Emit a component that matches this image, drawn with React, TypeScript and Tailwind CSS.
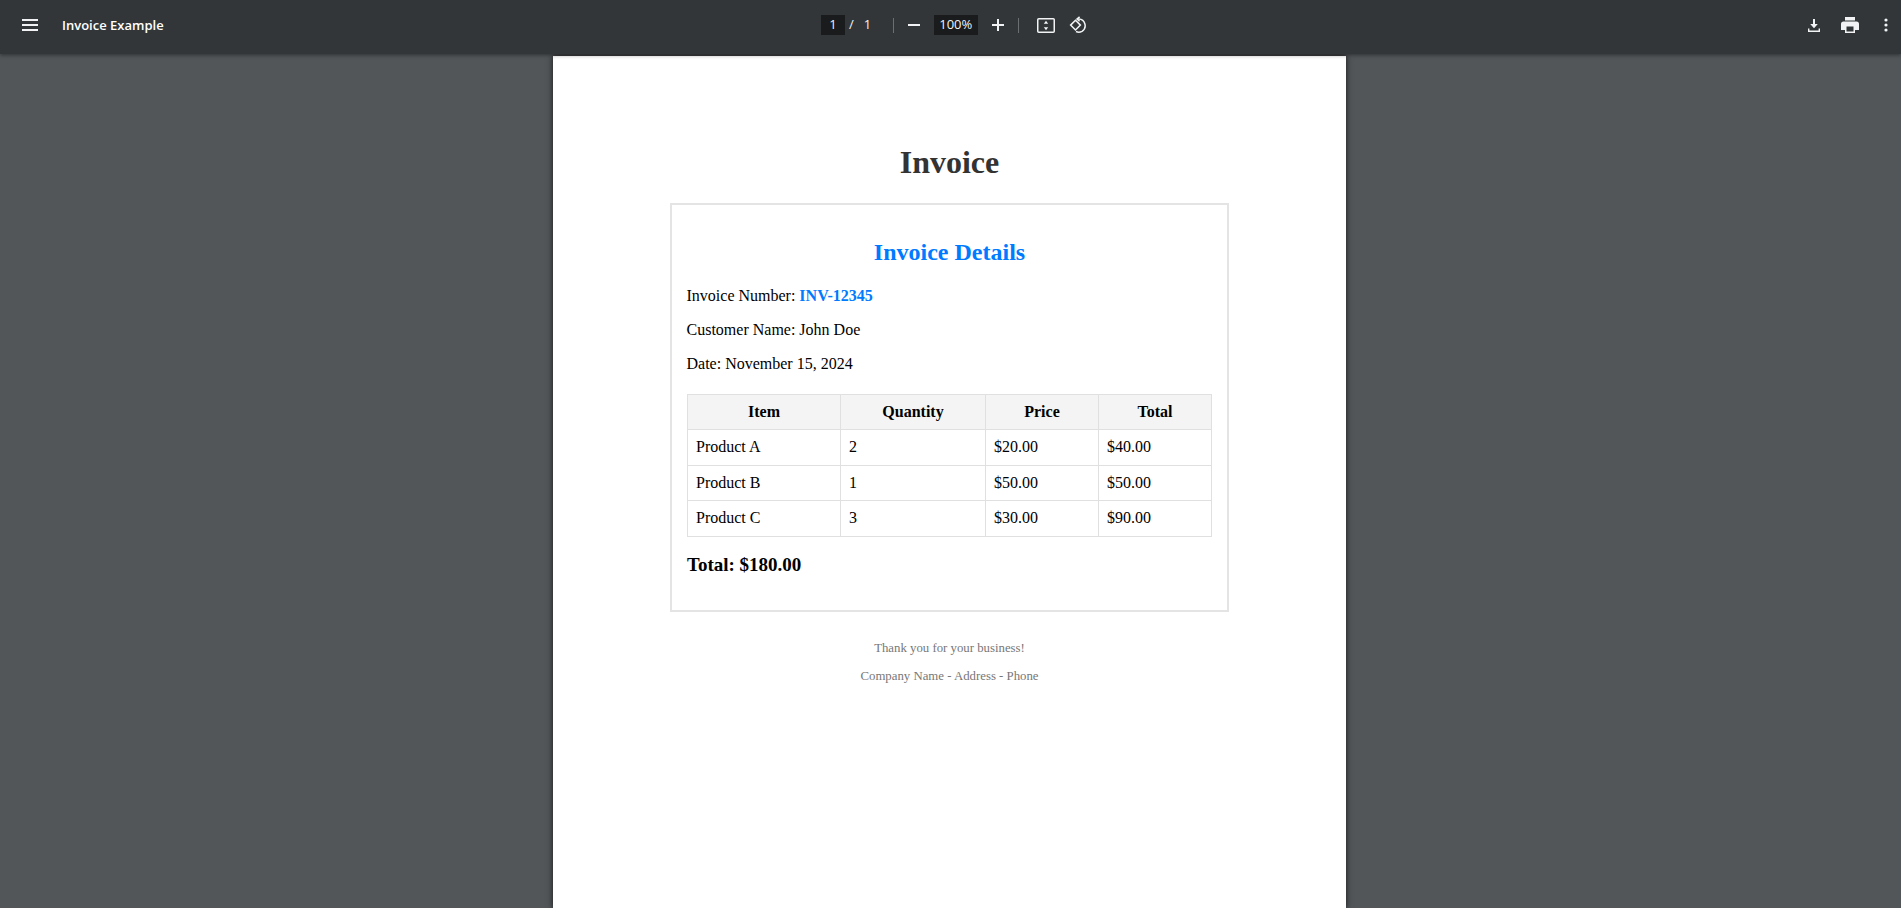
const rows = [
  { item: "Product A", qty: "2", price: "$20.00", total: "$40.00" },
  { item: "Product B", qty: "1", price: "$50.00", total: "$50.00" },
  { item: "Product C", qty: "3", price: "$30.00", total: "$90.00" },
]

function Toolbar() {
  return (
    <header className="relative z-10 flex h-[54px] items-center bg-[#323639] pb-[4px] text-white shadow-[0_1px_4px_rgba(0,0,0,0.45)] font-['Open_Sans',sans-serif]">
      <div className="flex w-[821px] shrink-0 items-center pl-[22px]">
        <svg width="16" height="12" viewBox="0 0 16 12" fill="#f1f3f4">
          <rect width="16" height="2" />
          <rect y="5" width="16" height="2" />
          <rect y="10" width="16" height="2" />
        </svg>
        <span className="ml-6 text-[13px] font-semibold leading-none text-white">Invoice Example</span>
      </div>

      <div className="flex items-center text-[13px] text-[#f1f3f4]">
        <span className="flex h-5 w-6 items-center justify-center bg-[#191b1c]">1</span>
        <span className="ml-[4px]">/</span>
        <span className="ml-[10px] w-[29px]">1</span>
        <div className="h-[15px] w-px bg-[#6b6f72]" />
        <svg className="ml-[14px]" width="12" height="2" viewBox="0 0 12 2" fill="#f1f3f4">
          <rect width="12" height="2" />
        </svg>
        <span className="ml-[14px] flex h-5 w-11 items-center justify-center bg-[#191b1c]">100%</span>
        <svg className="ml-[14px]" width="12" height="12" viewBox="0 0 12 12" fill="#f1f3f4">
          <rect y="5" width="12" height="2" />
          <rect x="5" width="2" height="12" />
        </svg>
        <div className="ml-[14px] h-[15px] w-px bg-[#6b6f72]" />
        <svg className="ml-[18px]" width="18" height="15" viewBox="0 0 18 15" fill="none">
          <rect x="0.75" y="0.75" width="16.5" height="13.5" rx="1" stroke="#f1f3f4" strokeWidth="1.5" />
          <path d="M9 2.800 11.200 5.800H6.800zM9 12.200 6.800 9.200h4.400z" fill="#f1f3f4" />
        </svg>
        <svg className="ml-[14px]" width="18" height="18" viewBox="0 0 18 18" fill="none" stroke="#f1f3f4" strokeWidth="1.5">
          <path d="M6.500 4.200 1.600 9.100l4.900 4.900 4.900-4.900z" />
          <path d="M8.200 3.100h1.600a6.600 6.600 0 0 1 3.200 12.200 6.600 6.600 0 0 1-6 .2" />
          <path d="M10.600.9 8 3.100l2.600 2.200" />
        </svg>
      </div>

      <div className="ml-auto flex items-center pr-[13px]">
        <svg width="12" height="13" viewBox="0 0 12 13" fill="#f1f3f4">
          <path d="M5 0h2v5h2.800L6 9.200 2.200 5H5z" />
          <path d="M0 9.500h1.400v2.100h9.200V9.500H12V13H0z" />
        </svg>
        <svg className="ml-[21px]" width="18" height="16" viewBox="0 0 18 16" fill="#f1f3f4">
          <path fillRule="evenodd" d="M4 0h10v3.500H4zM2.500 4.500h13A2.500 2.500 0 0 1 18 7v6h-4v3H4v-3H0V7a2.500 2.500 0 0 1 2.500-2.500zM5.500 9.500V14.500h7V9.500z" />
        </svg>
        <svg className="ml-[25px]" width="4" height="14" viewBox="0 0 4 14" fill="#f1f3f4">
          <circle cx="2" cy="2" r="1.600" />
          <circle cx="2" cy="7" r="1.600" />
          <circle cx="2" cy="12" r="1.600" />
        </svg>
      </div>
    </header>
  )
}

export default function App() {
  return (
    <div className="h-[908px] overflow-hidden bg-[#525659]">
      <Toolbar />
      <main className="mt-[2px] ml-[553px] h-[852px] w-[793px] bg-white pt-[88px] shadow-[0_0_6px_rgba(0,0,0,0.75)] font-['Liberation_Serif',serif] text-[16px] text-black">
        <h1 className="text-center text-[32px] font-bold leading-[37px] text-[#333]">Invoice</h1>
        <section className="mx-[117px] mt-[22px] h-[409px] border-2 border-[#e4e4e4] px-[15px] pt-[33px]">
          <h2 className="text-center text-[24px] font-bold leading-[28px] text-[#007bff]">Invoice Details</h2>
          <p className="mt-[21px] -ml-[0.5px] leading-[18px]">
            Invoice Number: <span className="font-bold text-[#007bff]">INV-12345</span>
          </p>
          <p className="mt-4 -ml-[0.5px] leading-[18px]">Customer Name: John Doe</p>
          <p className="mt-4 -ml-[0.5px] leading-[18px]">Date: November 15, 2024</p>
          <table className="mt-[21px] w-[524px] table-fixed border-collapse">
            <colgroup>
              <col className="w-[153px]" />
              <col className="w-[145px]" />
              <col className="w-[113px]" />
              <col className="w-[113px]" />
            </colgroup>
            <thead>
              <tr className="h-[35px] bg-[#f4f4f4]">
                <th className="border border-[#e0e0e0] font-bold">Item</th>
                <th className="border border-[#e0e0e0] font-bold">Quantity</th>
                <th className="border border-[#e0e0e0] font-bold">Price</th>
                <th className="border border-[#e0e0e0] font-bold">Total</th>
              </tr>
            </thead>
            <tbody>
              {rows.map((r) => (
                <tr key={r.item} className="h-[35.500px]">
                  <td className="border border-[#e0e0e0] px-2">{r.item}</td>
                  <td className="border border-[#e0e0e0] px-2">{r.qty}</td>
                  <td className="border border-[#e0e0e0] px-2">{r.price}</td>
                  <td className="border border-[#e0e0e0] px-2">{r.total}</td>
                </tr>
              ))}
            </tbody>
          </table>
          <p className="mt-[17px] text-[19px] font-bold leading-[22px]">Total: $180.00</p>
        </section>
        <footer className="mt-[28px] text-center text-[12.800px] leading-[16px] text-[#777]">
          <p>Thank you for your business!</p>
          <p className="mt-[12px]">Company Name - Address - Phone</p>
        </footer>
      </main>
    </div>
  )
}
